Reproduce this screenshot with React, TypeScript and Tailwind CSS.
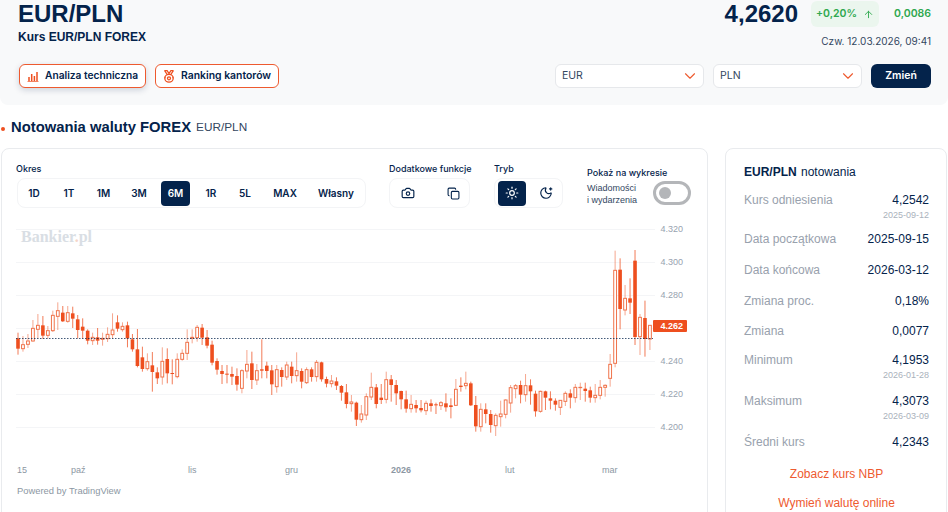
import { ArrowUp, Camera, ChevronDown, Copy, MoonStar, Sun } from 'lucide-react';

// candles traced as [wick top, body top, body bottom, wick bottom, filled], y in px*3 from the y0 of each block
type Candle = [number, number, number, number, number];

const blockA: Candle[] = [
  [128,145,176,194,1],[138,164,176,185,0],[132,153,163,174,0],[90,115,153,155,0],[72,106,118,145,0],[78,106,137,147,1],[108,122,136,146,0],[62,76,122,126,0],[37,62,79,120,0],
  [48,68,94,96,1],[48,68,94,98,0],[50,70,86,114,1],[75,88,120,145,1],[85,110,122,145,1],[118,122,152,163,1],[128,142,152,165,0],[114,142,152,164,1],[128,145,148,167,0],
  [112,133,146,156,0],[70,120,134,146,0],[76,97,116,125,1],[97,109,119,125,0],[95,106,145,172,1],[132,148,178,185,1],[117,178,228,232,1],[170,202,237,245,1],[190,215,236,242,0],
  [186,226,246,305,1],[232,247,265,282,1],[172,214,261,284,0],[175,207,250,280,1],[208,249,252,283,1],[190,208,260,265,0],[178,190,208,212,0],[118,157,190,210,0],[118,142,145,160,0],
  [105,112,143,155,0],[102,113,143,165,1],[120,142,167,175,1],[152,164,218,226,1],[205,213,239,254,1],[225,243,252,282,1],[225,251,254,280,1],[230,252,260,285,1],[235,258,284,302,1],
];
const blockB: Candle[] = [
  [118,122,175,190,0],[60,103,123,145,0],[65,100,150,177,1],[102,122,150,165,0],[28,118,122,145,1],[95,107,123,145,1],[105,121,163,195,1],[105,119,170,188,0],[112,120,141,170,1],
  [95,105,141,150,0],[95,110,138,160,1],[67,122,137,155,0],[115,123,155,175,1],[112,119,158,162,0],[112,118,141,155,1],[90,97,140,155,0],[95,97,148,155,1],[140,147,161,172,1],
  [135,153,161,172,0],[142,154,167,180,1],[165,168,188,212,1],[162,187,222,235,1],[195,216,221,245,0],[215,218,269,288,1],[225,252,269,278,0],[190,200,255,270,0],[128,172,201,210,0],
  [162,172,222,235,1],[162,203,210,222,1],[125,149,208,220,0],[135,148,165,215,1],[150,165,190,225,1],[182,183,208,238,1],[182,208,236,248,1],[195,223,236,248,0],[210,225,235,248,1],
  [210,234,241,247,1],[212,220,242,255,0],[208,220,228,245,1],[218,223,226,252,1],[213,218,227,240,0],[190,220,232,245,1],[205,226,231,265,1],[147,178,226,228,0],[142,167,171,185,1],
  [125,160,167,178,0],[155,160,226,228,1],[198,225,289,305,1],
];
const blockC: Candle[] = [
  [290,308,360,375,0],[290,308,322,350,1],[310,322,355,378,1],[320,326,357,388,0],[282,322,330,360,0],[278,280,323,335,0],[235,243,289,318,0],[232,237,246,275,0],[222,235,264,290,1],
  [202,237,264,285,0],[218,236,254,294,1],[252,261,314,330,1],[252,254,314,318,0],[252,254,273,310,1],[254,275,282,308,1],[275,282,294,312,1],[280,281,302,325,0],[254,260,284,298,0],
  [248,260,273,305,1],[232,242,273,288,0],[228,242,243,280,0],[228,246,253,285,1],[240,251,273,288,1],[232,266,273,288,0],[220,242,266,278,0],[233,236,242,270,0],[142,173,215,240,0],
  [-168,-109,170,182,0],[-145,-111,7,68,1],[-65,-25,10,26,0],[-85,-25,-12,22,1],[-170,-138,91,115,1],[22,32,90,145,0],[-18,34,97,150,1],[55,56,97,130,0],
];

const candles = [
  ...blockA.map((c) => ({ c, y0: 290 })),
  ...blockB.map((c) => ({ c, y0: 330 })),
  ...blockC.map((c) => ({ c, y0: 306.67 })),
];

const gridLines = [229.5, 262.5, 295.5, 328.5, 361.5, 394.5, 427.5];
const priceLabels = ['4.320', '4.300', '4.280', '', '4.240', '4.220', '4.200'];
const timeLabels = [
  { t: '15', x: 17 },
  { t: 'paź', x: 71 },
  { t: 'lis', x: 188 },
  { t: 'gru', x: 285 },
  { t: '2026', x: 391 },
  { t: 'lut', x: 505 },
  { t: 'mar', x: 602 },
];

const ranges = [
  { t: '1D', w: 'w-[32px]' },
  { t: '1T', w: 'w-[38px]' },
  { t: '1M', w: 'w-[31px]' },
  { t: '3M', w: 'w-[40px]' },
  { t: '6M', w: 'w-[29px] ml-[2px]', active: true },
  { t: '1R', w: 'w-[42px]' },
  { t: '5L', w: 'w-[26px]' },
  { t: 'MAX', w: 'w-[54px]' },
  { t: 'Własny', w: 'w-[48px]' },
];

const stats = [
  { label: 'Kurs odniesienia', value: '4,2542', sub: '2025-09-12', h: 'h-[39px]' },
  { label: 'Data początkowa', value: '2025-09-15', h: 'h-[31px]' },
  { label: 'Data końcowa', value: '2026-03-12', h: 'h-[31px]' },
  { label: 'Zmiana proc.', value: '0,18%', h: 'h-[30px]' },
  { label: 'Zmiana', value: '0,0077', h: 'h-[29px]' },
  { label: 'Minimum', value: '4,1953', sub: '2026-01-28', h: 'h-[41px]' },
  { label: 'Maksimum', value: '4,3073', sub: '2026-03-09', h: 'h-[41px]' },
  { label: 'Średni kurs', value: '4,2343', h: 'h-[32px]' },
];

function BarsIcon() {
  return (
    <svg width="12" height="12" viewBox="0 0 12 12" fill="none" stroke="#ee4f1f">
      <path d="M0.5 11.5h11" strokeOpacity="0.7" />
      <path d="M2 11V7M4.7 11V4M7.4 11V6M10 11V2" strokeWidth="1.5" />
    </svg>
  );
}

function RankIcon() {
  return (
    <svg width="12" height="13" viewBox="0 0 12 13" fill="none" stroke="#ee4f1f" strokeWidth="1.3">
      <path d="M1.5 0.5l2.8 4.2M10.5 0.5L7.7 4.7M1.5 0.5h2.5l2 3 2-3h2.5" />
      <path d="M1.5 7.5h1M9.5 7.5h1" />
      <ellipse cx="6" cy="8.3" rx="4.2" ry="3.9" />
      <circle cx="6" cy="8.3" r="1.5" />
    </svg>
  );
}

function Chart() {
  const axisFont = "'Liberation Sans', sans-serif";
  return (
    <svg width="676" height="254" viewBox="16 224 676 254" className="block -mt-[2px]">
      {gridLines.map((y) => (
        <line key={y} x1="16" x2="655" y1={y} y2={y} stroke="#f4f5f7" />
      ))}
      {gridLines.map((y, i) => (
        <text key={i} x="660.5" y={y + 2.5} fontSize="9" fill="#98a3b0" fontFamily={axisFont}>
          {priceLabels[i]}
        </text>
      ))}
      <text x="21" y="242" fontSize="16" fontWeight="700" fill="#d9dee4" fontFamily="'Liberation Serif', serif">
        Bankier<tspan fill="#f5d5c8">.</tspan>pl
      </text>
      {candles.map(({ c, y0 }, i) => {
        const x = 18 + i * 4.976;
        const [hi, top, bottom, lo, filled] = c;
        const yOf = (v: number) => y0 + v / 3;
        return (
          <g key={i}>
            <line x1={x} x2={x} y1={yOf(hi)} y2={yOf(lo)} stroke="#ee4f1f" strokeOpacity={filled ? 0.75 : 0.5} />
            {filled ? (
              <rect x={x - 1.8} y={yOf(top)} width="3.6" height={yOf(bottom) - yOf(top)} fill="#ee4f1f" />
            ) : (
              <rect x={x - 1.4} y={yOf(top)} width="2.8" height={yOf(bottom) - yOf(top)} fill="#fff" stroke="#f0744c" />
            )}
          </g>
        );
      })}
      <line x1="16" x2="653" y1="338.5" y2="338.5" stroke="#04234b" strokeDasharray="1.5 1.5" strokeOpacity="0.75" />
      <rect x="653" y="320" width="34" height="12" rx="1" fill="#ee4f1f" />
      <text x="660.5" y="329" fontSize="9" fontWeight="700" fill="#fff" fontFamily={axisFont}>
        4.262
      </text>
      {timeLabels.map((l) => (
        <text key={l.t} x={l.x} y="472.5" fontSize="9" fill="#8c97a3" fontWeight={l.t === '2026' ? 700 : 400} fontFamily={axisFont}>
          {l.t}
        </text>
      ))}
    </svg>
  );
}

export default function App() {
  return (
    <div className="w-[948px] h-[512px] overflow-hidden bg-white text-[#04234b] font-['Inter',sans-serif]">
      {/* top band */}
      <header className="h-[105px] bg-[#f8f9fa] rounded-b-lg pl-[18px] pr-[17px] flex justify-between">
        <div>
          <h1 className="font-['Liberation_Sans',sans-serif] text-[24px] leading-[28px] font-bold">EUR/PLN</h1>
          <p className="font-['Liberation_Sans',sans-serif] text-[12px] leading-[16px] font-bold mt-px">Kurs EUR/PLN FOREX</p>
          <div className="flex gap-[9px] mt-[19px] ml-px">
            <button className="h-[24px] w-[127px] bg-white border-[1.5px] border-[#ee5a2f] rounded-md flex items-center pl-[7px] gap-[6px] text-[10.2px] font-semibold shadow-[0_2px_6px_rgba(4,35,75,0.18)]">
              <BarsIcon />
              Analiza techniczna
            </button>
            <button className="h-[24px] w-[124px] bg-white border-[1.5px] border-[#ee5a2f] rounded-md flex items-center pl-[7px] gap-[6px] text-[10.4px] font-semibold">
              <RankIcon />
              Ranking kantorów
            </button>
          </div>
        </div>
        <div className="flex flex-col items-end">
          <div className="flex items-center h-[28px]">
            <span className="font-['Liberation_Sans',sans-serif] text-[24px] font-bold">4,2620</span>
            <span className="ml-[13px] w-[68px] h-[26px] bg-[#ebf6ee] rounded-md flex items-center justify-center gap-[6px] text-[#2fa84f] text-[10.5px] font-semibold">
              +0,20%
              <ArrowUp size={11} strokeWidth={2} />
            </span>
            <span className="ml-[15px] text-[10.5px] font-semibold text-[#2fa84f]">0,0086</span>
          </div>
          <p className="text-[10px] mt-[7px] leading-[13px] text-[#33475f]">Czw. 12.03.2026, 09:41</p>
          <div className="flex gap-[9px] mt-[16px]">
            {['EUR', 'PLN'].map((cur) => (
              <div key={cur} className="w-[149px] h-[24px] bg-white border border-[#e6e8eb] rounded-md flex items-center justify-between pl-[6px] pr-[4px] text-[10.5px] text-[#33475f]">
                {cur}
                <ChevronDown size={18} strokeWidth={1.5} color="#ee5a2f" />
              </div>
            ))}
            <button className="w-[60px] h-[24px] bg-[#04234b] text-white rounded-md text-[10.5px] font-semibold">Zmień</button>
          </div>
        </div>
      </header>

      {/* section title */}
      <div className="flex items-center h-[22px] mt-[11px] pl-[1px] font-['Liberation_Sans',sans-serif]">
        <span className="w-[4px] h-[4px] rounded-full bg-[#ee4f1f] mt-[3px]" />
        <h2 className="ml-[6px] text-[14.8px] font-bold">Notowania waluty FOREX</h2>
        <span className="ml-[5px] text-[11.8px] text-[#33475f] mt-px">EUR/PLN</span>
      </div>

      <div className="flex items-start mt-[10px] pl-px">
        {/* chart card */}
        <section className="w-[707px] h-[400px] border border-[#e9ebee] rounded-lg pl-[14px] pt-[14px] bg-white">
          <div className="flex items-start h-[63px]">
            <div className="w-[373px]">
              <p className="text-[9px] leading-[12px] font-medium">Okres</p>
              <div className="flex items-center h-[30px] w-[349px] mt-[3px] ml-px border border-[#f3f4f6] rounded-lg text-[10px] font-semibold">
                {ranges.map((r) => (
                  <span key={r.t} className={`${r.w} h-[25px] flex items-center justify-center rounded ${r.active ? 'bg-[#04234b] text-white' : ''}`}>
                    {r.t}
                  </span>
                ))}
              </div>
            </div>
            <div className="w-[105px]">
              <p className="text-[9px] leading-[12px] font-medium">Dodatkowe funkcje</p>
              <div className="flex items-center h-[30px] w-[81px] mt-[3px] border border-[#f3f4f6] rounded-lg">
                <span className="w-[36px] flex justify-center"><Camera size={14} /></span>
                <span className="w-[32px] ml-auto flex justify-center"><Copy size={13} /></span>
              </div>
            </div>
            <div className="w-[93px]">
              <p className="text-[9px] leading-[12px] font-medium">Tryb</p>
              <div className="flex items-center h-[30px] w-[69px] mt-[3px] border border-[#f3f4f6] rounded-lg pl-[3px]">
                <span className="w-[28px] h-[25px] rounded bg-[#04234b] text-white flex items-center justify-center"><Sun size={14} /></span>
                <span className="w-[36px] pl-[4px] flex justify-center"><MoonStar size={14} /></span>
              </div>
            </div>
            <div className="mt-[4px]">
              <p className="text-[9px] leading-[12px] font-medium">Pokaż na wykresie</p>
              <div className="flex items-center">
                <p className="w-[66px] font-['Liberation_Sans',sans-serif] text-[9px] leading-[12px] text-[#33475f] mt-[3px]">Wiadomości<br />i wydarzenia</p>
                <span className="w-[38px] h-[24px] border-[3px] border-[#b4b6b9] rounded-full bg-white flex items-center pl-[3px]">
                  <span className="w-[12px] h-[12px] rounded-full bg-[#b4b6b9]" />
                </span>
              </div>
            </div>
          </div>
          <Chart />
          <p className="font-['Liberation_Sans',sans-serif] text-[9.4px] leading-[12px] mt-[7px] ml-px text-[#8c97a3]">Powered by TradingView</p>
        </section>

        {/* stats card */}
        <aside className="ml-[17px] w-[222px] h-[400px] border border-[#e9ebee] rounded-lg pl-[18px] pr-[17px] pt-[16px] font-['Liberation_Sans',sans-serif]">
          <p className="text-[12px] leading-[15px] mb-[13px]">
            <b>EUR/PLN</b> <span className="ml-px">notowania</span>
          </p>
          {stats.map((s) => (
            <div key={s.label} className={`${s.h} flex justify-between`}>
              <span className="text-[12px] leading-[15px] text-[#98a1ad]">{s.label}</span>
              <div className="text-right">
                <p className="text-[12px] leading-[15px]">{s.value}</p>
                {s.sub && <p className="text-[9px] leading-[12px] mt-px text-[#aab2bc]">{s.sub}</p>}
              </div>
            </div>
          ))}
          <p className="text-[12px] leading-[15px] text-center text-[#ee5a2f]">Zobacz kurs NBP</p>
          <p className="text-[12px] leading-[15px] text-center text-[#ee5a2f] mt-[14px]">Wymień walutę online</p>
        </aside>
      </div>
    </div>
  );
}
